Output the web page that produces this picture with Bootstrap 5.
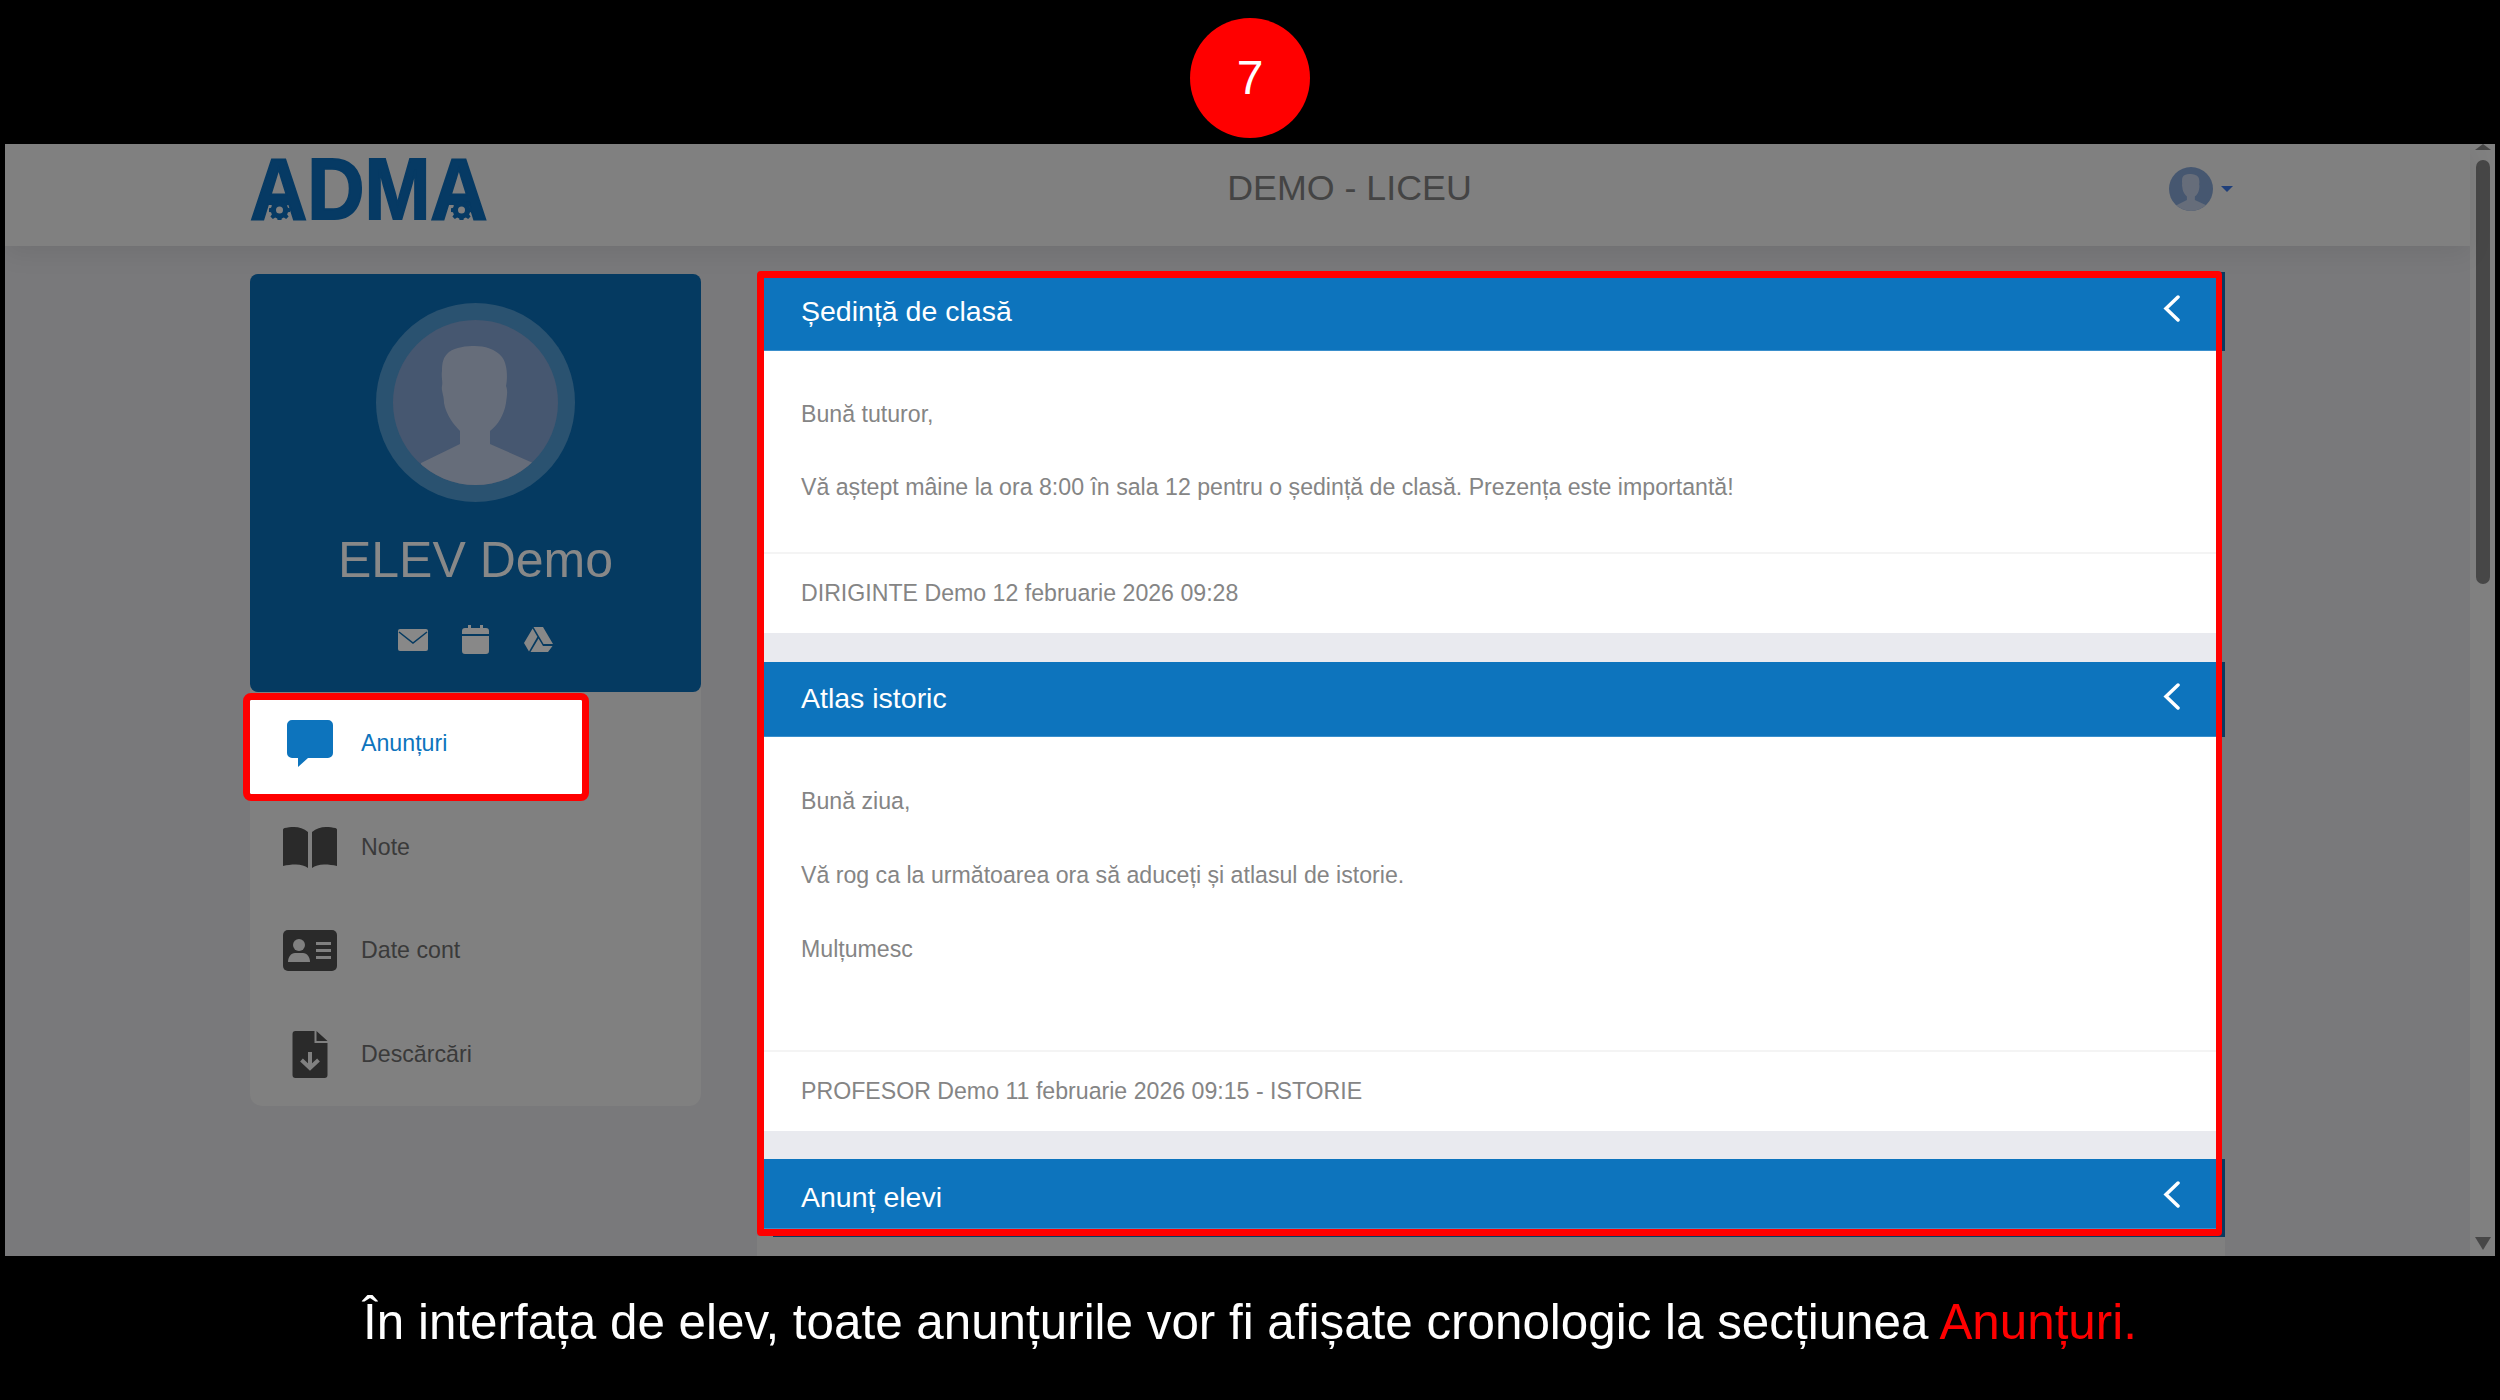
<!DOCTYPE html>
<html lang="ro">
<head>
  <meta charset="UTF-8" />
  <meta name="viewport" content="width=device-width, initial-scale=1.0"/>
  <title>ADMA - Anunțuri</title>
  <link rel="stylesheet" href="https://cdn.jsdelivr.net/npm/bootstrap@5.3.0/dist/css/bootstrap.min.css"/>
  <style>
    html, body { height: 100%; }
    body {
      background: #000;
      font-family: "Liberation Sans", Arial, sans-serif;
      overflow: hidden;
    }
    .top-strip { height: 144px; padding-top: 18px; }
    .step-badge {
      width: 120px;
      height: 120px;
      background: #f00;
      color: #fff;
      font-size: 48px;
    }
    .browser-frame { height: 1112px; margin: 0 5px 0 5px; }
    .page-area { width: 2465px; background: #79797b; }
    .top-header {
      height: 102px;
      background: #808080;
      padding-left: 245px;
      box-shadow: 0 8px 24px rgba(0, 0, 0, .07);
      position: relative;
    }
    .adma-logo {
      position: relative;
      width: 240px;
      height: 63px;
      margin-top: 13px;
    }
    .adma-text {
      font-size: 88px;
      line-height: 63px;
      font-weight: 700;
      color: #063a64;
      -webkit-text-stroke: 2px #063a64;
      transform: scaleX(.9);
      transform-origin: left center;
      white-space: nowrap;
    }
    .adma-gear { position: absolute; width: 21px; height: 21px; top: 42px; }
    .gear-one { left: 19px; }
    .gear-two { left: 201px; }
    .school-name {
      font-size: 35.8px;
      color: #444;
      padding-left: 40px;
      margin-top: -12px;
    }
    .user-menu { margin-right: 237px; gap: 8px; margin-top: -12px; }
    .user-caret {
      width: 0;
      height: 0;
      border-left: 6px solid transparent;
      border-right: 6px solid transparent;
      border-top: 6px solid #1f3f7a;
    }
    .content-area { padding-left: 245px; height: 1010px; }
    .side-panel {
      width: 451px;
      height: 832px;
      margin-top: 28px;
      background: #808080;
      border-radius: 12px;
    }
    .profile-box {
      height: 418px;
      padding-top: 29px;
      background: #053a61;
      border-radius: 8px;
    }
    .profile-name {
      font-size: 50px;
      line-height: 58px;
      margin: 28.5px 0 36.5px;
      color: #888;
    }
    .profile-icon { width: 63px; height: 29px; }
    .side-link {
      height: 103.5px;
      font-size: 23.2px;
      color: #3a3a3a;
      padding-left: 33px;
      gap: 24px;
      text-decoration: none;
    }
    .side-link svg { width: 54px; flex: none; }
    .side-link.is-active {
      width: 332px;
      height: 94px;
      margin: 8px 0 1.5px;
      padding-bottom: 8px;
      background: #fff;
      color: #0d74bd;
      outline: 7px solid #f00;
      border-radius: 1px;
      position: relative;
    }
    .notice-column { width: 1468px; margin-left: 56px; }
    .notice-stack {
      position: relative;
      width: 1452px;
      height: 951px;
      margin: 32px 0 0 7px;
      background: #e9eaef;
    }
    .notice-stack::after {
      content: "";
      position: absolute;
      inset: -7px -6px -7px -7px;
      border: 7px solid #f00;
      border-right-width: 6px;
      border-radius: 4px;
      z-index: 2;
      pointer-events: none;
    }
    .notice-card { border: 0; border-radius: 0; }
    .notice-head {
      padding: 0 36px 0 37px;
      background: #0d74bd;
      border-bottom: 1px solid #3a8fcc;
      border-radius: 0 !important;
      color: #fff;
      font-size: 28.5px;
      box-shadow: 9px 0 0 #0a3a60;
    }
    .notice-head svg { width: 17px; height: 27px; }
    .notice-card:nth-child(1) { margin-bottom: 29px; }
    .notice-card:nth-child(1) .notice-head {
      height: 73px;
      padding-bottom: 5px;
      box-shadow: 9px 0 0 #0a3a60, 9px -6px 0 #0a3a60;
    }
    .notice-card:nth-child(1) .notice-head svg { margin-top: -6px; }
    .notice-card:nth-child(1) .notice-body { padding-top: 44.5px; padding-bottom: 46.5px; }
    .notice-card:nth-child(2) { margin-bottom: 28px; }
    .notice-card:nth-child(2) .notice-head { height: 75px; padding-bottom: 1px; }
    .notice-card:nth-child(2) .notice-head svg { margin-top: -4px; }
    .notice-card:nth-child(2) .notice-body { padding-top: 46px; padding-bottom: 45px; }
    .notice-card:nth-child(2) .notice-body p { margin-bottom: 38px; }
    .notice-card:nth-child(3) .notice-head {
      height: 70px;
      padding-top: 8px;
      box-shadow: 9px 0 0 #0a3a60, 9px 8px 0 #0a3a60;
    }
    .notice-card:nth-child(3) .notice-head svg { margin-top: -6px; }
    .notice-body {
      padding: 45.5px 37px;
      font-size: 23.15px;
      line-height: 36px;
      color: #858585;
    }
    .notice-body p { margin-bottom: 37.5px; }
    .notice-card:nth-child(1) .notice-body p:last-child { margin-bottom: 0; }
    .notice-foot {
      height: 81px;
      padding: 0 37px;
      background: #fff;
      border-top: 2px solid #f4f4f4;
      border-radius: 0 !important;
      font-size: 23.15px;
      color: #858585;
    }
    .column-rest { height: 20px; margin-top: 7px; background: #808080; }
    .scroll-rail { width: 25px; background: #808080; padding: 0 0 6px; }
    .scroll-up {
      width: 0;
      height: 0;
      margin: 0 auto;
      border-left: 8px solid transparent;
      border-right: 8px solid transparent;
      border-bottom: 6px solid #474747;
    }
    .scroll-thumb {
      width: 14px;
      height: 424px;
      margin: 10px auto 0 6px;
      background: #474747;
      border-radius: 7px;
    }
    .scroll-down {
      width: 0;
      height: 0;
      margin: auto auto 0;
      border-left: 8px solid transparent;
      border-right: 8px solid transparent;
      border-top: 13px solid #474747;
    }
    .caption-strip {
      height: 144px;
      padding-bottom: 12px;
      color: #fff;
      font-size: 49.35px;
    }
    .caption-accent { color: #f00; }
  </style>
</head>
<body>
  <svg width="0" height="0" class="d-block">
    <defs>
      <clipPath id="faceClip"><circle cx="99.5" cy="99.5" r="82.5"/></clipPath>
      <symbol id="personPic" viewBox="17 17 165 165">
        <circle cx="99.5" cy="99.5" r="82.5" fill="#465770"/>
        <path clip-path="url(#faceClip)" fill="#666d7a" d="M99 43C90 43 80 44 73 49C67 54 66 60 66 68C65 74 67 78 66 83C65 88 68 92 68 100C70 112 78 122 84 128V141L45 160V190H157V160L114 141V128C122 122 128 112 130 100C131 92 132 88 130 83C132 74 131 60 126 54C120 46 108 43 99 43Z"/>
      </symbol>
    </defs>
  </svg>

  <div class="top-strip d-flex justify-content-center">
    <div class="step-badge rounded-circle d-flex align-items-center justify-content-center">7</div>
  </div>

  <div class="browser-frame d-flex">
    <div class="page-area">
      <header class="top-header d-flex align-items-start">
        <div class="adma-logo">
          <div class="adma-text">ADMA</div>
          <svg class="adma-gear gear-one" viewBox="0 0 24 24"><path fill="#063a64" d="M10 1h4l.6 3 2.4 1 2.6-1.700 2.800 2.800L20.700 8.700l1 2.300 3 .6v4l-3 .6-1 2.400 1.700 2.500-2.800 2.800-2.600-1.700-2.400 1-.6 3h-4l-.6-3-2.400-1-2.600 1.700-2.800-2.800 1.700-2.500-1-2.400-3-.6v-4l3-.6 1-2.300L1.600 6.100 4.400 3.300 7 5l2.400-1z" transform="translate(0 -1)"/><circle cx="12" cy="12.500" r="4" fill="#808080"/></svg>
          <svg class="adma-gear gear-two" viewBox="0 0 24 24"><path fill="#063a64" d="M10 1h4l.6 3 2.4 1 2.6-1.700 2.800 2.800L20.700 8.700l1 2.300 3 .6v4l-3 .6-1 2.400 1.700 2.500-2.800 2.800-2.600-1.700-2.400 1-.6 3h-4l-.6-3-2.400-1-2.600 1.700-2.800-2.800 1.700-2.500-1-2.400-3-.6v-4l3-.6 1-2.300L1.600 6.100 4.400 3.300 7 5l2.400-1z" transform="translate(0 -1)"/><circle cx="12" cy="12.500" r="4" fill="#808080"/></svg>
        </div>
        <div class="school-name flex-grow-1 text-center align-self-center">DEMO - LICEU</div>
        <div class="user-menu d-flex align-items-center align-self-center">
          <svg width="44" height="44"><use href="#personPic"/></svg>
          <span class="user-caret"></span>
        </div>
      </header>

      <main class="content-area d-flex">
        <aside class="side-panel">
          <div class="profile-box d-flex flex-column align-items-center">
            <svg width="199" height="199" viewBox="0 0 199 199">
              <circle cx="99.500" cy="99.500" r="99.500" fill="#2a5270"/>
              <use href="#personPic" x="17" y="17" width="165" height="165"/>
            </svg>
            <div class="profile-name">ELEV Demo</div>
            <div class="d-flex">
              <div class="profile-icon d-flex align-items-center justify-content-center">
                <svg width="30" height="22" viewBox="0 0 30 22"><rect width="30" height="22" rx="2" fill="#888"/><path d="M1 3l14 11L29 3" fill="none" stroke="#053a61" stroke-width="1.500"/></svg>
              </div>
              <div class="profile-icon d-flex align-items-center justify-content-center">
                <svg width="27" height="29" viewBox="0 0 27 29"><path fill="#888" d="M6 0h3v3h9V0h3v3h3a3 3 0 0 1 3 3v3H0V6a3 3 0 0 1 3-3h3zM0 11h27v15a3 3 0 0 1-3 3H3a3 3 0 0 1-3-3z"/></svg>
              </div>
              <div class="profile-icon d-flex align-items-center justify-content-center">
                <svg width="29" height="25" viewBox="0 0 29 25"><path fill="#888" d="M9.500 0h9.500l10 17h-9.500zM8.600 1.500l4.800 8.200L5 24.500 0 16zM14.500 11.500L19 19h9.500l-4.500 6H6.500z" fill-rule="evenodd"/></svg>
              </div>
            </div>
          </div>

          <nav class="nav flex-column">
            <a class="side-link is-active d-flex align-items-center" href="#">
              <svg height="47" viewBox="0 0 54 47"><path fill="#0d74bd" d="M9 0h36a5 5 0 0 1 5 5v28a5 5 0 0 1-5 5H25l-10 9 0-9H9a5 5 0 0 1-5-5V5a5 5 0 0 1 5-5z"/></svg>
              <span>Anunțuri</span>
            </a>
            <a class="side-link d-flex align-items-center" href="#">
              <svg height="41" viewBox="0 0 54 41"><path fill="#2a2a2a" d="M25 5v36c-3-2-7-3.500-12-3.500-5 0-9 .5-13 1.500V3c0-1 .5-1.500 1.500-2C4 .5 8 0 11 0c5 0 10 1.500 14 5zM29 5v36c3-2 7-3.500 12-3.500 5 0 9 .5 13 1.500V3c0-1-.5-1.500-1.500-2C50 .5 46 0 43 0c-5 0-10 1.500-14 5z"/></svg>
              <span>Note</span>
            </a>
            <a class="side-link d-flex align-items-center" href="#">
              <svg height="41" viewBox="0 0 54 41"><rect width="54" height="41" rx="5" fill="#2a2a2a"/><circle cx="16" cy="15" r="6" fill="#808080"/><path fill="#808080" d="M5 32c0-5 3-9 7-9h8c4 0 7 4 7 9z"/><path fill="#808080" d="M33 12h15v3H33zM33 19h15v3H33zM33 26h15v3H33z"/></svg>
              <span>Date cont</span>
            </a>
            <a class="side-link d-flex align-items-center" href="#">
              <svg height="47" viewBox="-9.500 0 54 47"><path fill="#2a2a2a" d="M3 0h19v12h13v32a3 3 0 0 1-3 3H3a3 3 0 0 1-3-3V3a3 3 0 0 1 3-3zM24 0l11 10H24z"/><path fill="none" stroke="#808080" stroke-width="4" d="M17.500 21v15M9 29l8.500 8 8.500-8"/></svg>
              <span>Descărcări</span>
            </a>
          </nav>
        </aside>

        <section class="notice-column">
          <div class="notice-stack">
            <article class="notice-card card">
              <div class="notice-head card-header d-flex align-items-center justify-content-between">
                <span>Ședință de clasă</span>
                <svg viewBox="0 0 17 27"><path d="M15 2L3 13.500 15 25" fill="none" stroke="#fff" stroke-width="3.500" stroke-linecap="round"/></svg>
              </div>
              <div class="notice-body card-body">
                <p>Bună tuturor,</p>
                <p>Vă aștept mâine la ora 8:00 în sala 12 pentru o ședință de clasă. Prezența este importantă!</p>
              </div>
              <div class="notice-foot card-footer d-flex align-items-center">DIRIGINTE Demo 12 februarie 2026 09:28</div>
            </article>

            <article class="notice-card card">
              <div class="notice-head card-header d-flex align-items-center justify-content-between">
                <span>Atlas istoric</span>
                <svg viewBox="0 0 17 27"><path d="M15 2L3 13.500 15 25" fill="none" stroke="#fff" stroke-width="3.500" stroke-linecap="round"/></svg>
              </div>
              <div class="notice-body card-body">
                <p>Bună ziua,</p>
                <p>Vă rog ca la următoarea ora să aduceți și atlasul de istorie.</p>
                <p>Mulțumesc</p>
              </div>
              <div class="notice-foot card-footer d-flex align-items-center">PROFESOR Demo 11 februarie 2026 09:15 - ISTORIE</div>
            </article>

            <article class="notice-card card">
              <div class="notice-head card-header d-flex align-items-center justify-content-between">
                <span>Anunț elevi</span>
                <svg viewBox="0 0 17 27"><path d="M15 2L3 13.500 15 25" fill="none" stroke="#fff" stroke-width="3.500" stroke-linecap="round"/></svg>
              </div>
            </article>
          </div>
          <div class="column-rest"></div>
        </section>
      </main>
    </div>

    <div class="scroll-rail d-flex flex-column">
      <div class="scroll-up"></div>
      <div class="scroll-thumb"></div>
      <div class="scroll-down"></div>
    </div>
  </div>

  <div class="caption-strip d-flex align-items-center justify-content-center">
    <div>În interfața de elev, toate anunțurile vor fi afișate cronologic la secțiunea <span class="caption-accent">Anunțuri.</span></div>
  </div>

  <script src="https://cdn.jsdelivr.net/npm/bootstrap@5.3.0/dist/js/bootstrap.bundle.min.js"></script>
</body>
</html>
